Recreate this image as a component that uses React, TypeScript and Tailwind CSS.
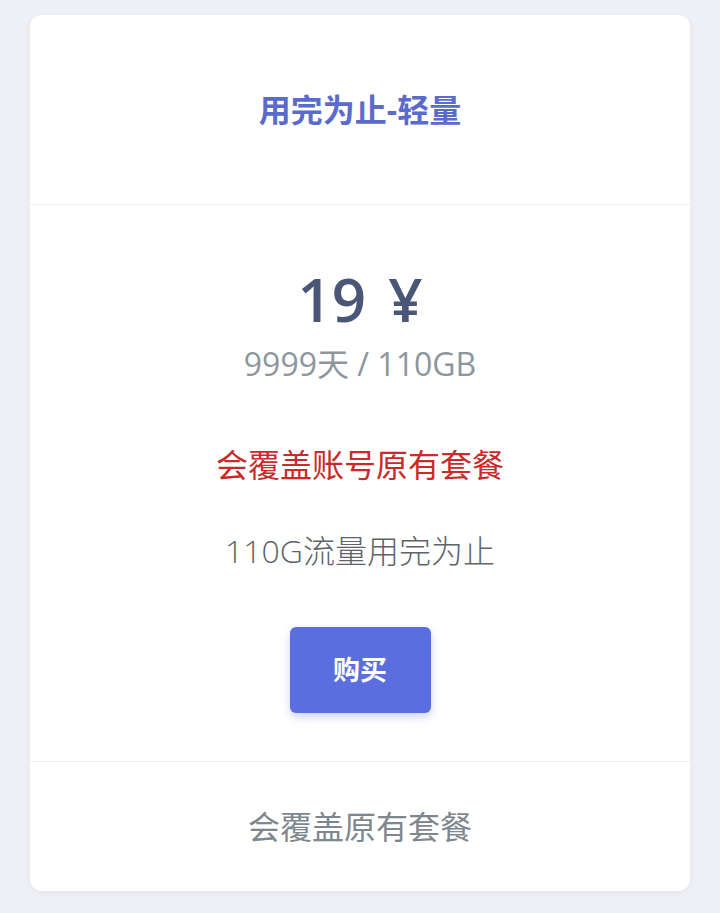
export default function App() {
  return (
    <div
      className="min-h-[913px] bg-[#eef0f5] px-[30px] pt-[15px] pb-[23px]"
      style={{ fontFamily: '"Open Sans", "Noto Sans CJK SC", sans-serif' }}
    >
      <div className="overflow-hidden rounded-xl bg-white shadow-[0_2px_6px_rgba(60,70,100,0.06)]">
        {/* 标题 */}
        <div className="flex h-[190px] items-center justify-center border-b border-[#eef0f3]">
          <h3 className="text-[32px] leading-[40px] font-bold text-[#5b6bcc]">用完为止-轻量</h3>
        </div>

        {/* 价格与说明 */}
        <div className="flex flex-col items-center border-b border-[#eef0f3] pt-[62px] pb-[48px]">
          <div className="flex items-center gap-[22px] text-[60px] leading-[64px] font-semibold text-[#4a5677]">
            <span>19</span>
            <span>¥</span>
          </div>
          <div className="mt-[13px] text-[32px] leading-[40px] text-[#8d969d]">9999天 / 110GB</div>
          <div className="mt-[61px] text-[32px] leading-[40px] text-[#c92a2a]">会覆盖账号原有套餐</div>
          <div className="mt-[46px] text-[32px] leading-[40px] font-light text-[#5f6468]">110G流量用完为止</div>
          <button className="mt-[56px] h-[86px] w-[141px] rounded-md bg-[#5a6ee0] text-[27px] font-bold text-white shadow-[0_4px_8px_rgba(90,110,224,0.3)]">
            购买
          </button>
        </div>

        {/* 底部 */}
        <div className="flex h-[129px] items-center justify-center">
          <span className="text-[32px] leading-[40px] text-[#7e878e]">会覆盖原有套餐</span>
        </div>
      </div>
    </div>
  );
}
